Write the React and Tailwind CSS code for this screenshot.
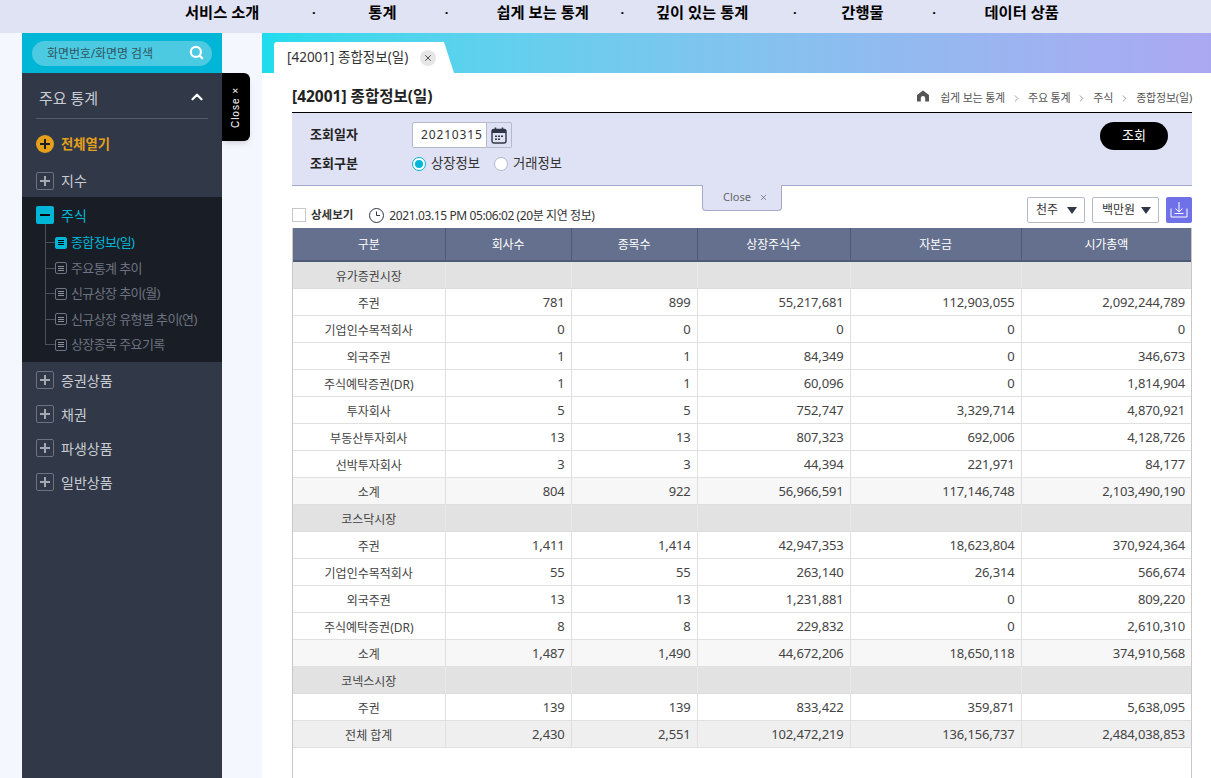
import { Search, ChevronUp, X, ChevronRight } from 'lucide-react'

const topMenu = [
  { label: '서비스 소개', gap: 'w-[109px]' },
  { label: '통계', gap: 'w-[100px]' },
  { label: '쉽게 보는 통계', gap: 'w-[67px]' },
  { label: '깊이 있는 통계', gap: 'w-[93px]' },
  { label: '간행물', gap: 'w-[101px]' },
  { label: '데이터 상품' },
]

const subMenu = [
  { label: '종합정보(일)', active: true },
  { label: '주요통계 추이' },
  { label: '신규상장 추이(월)' },
  { label: '신규상장 유형별 추이(연)' },
  { label: '상장종목 주요기록' },
]

const rows = [
  { type: 'section', cells: ['유가증권시장', '', '', '', '', ''] },
  { cells: ['주권', '781', '899', '55,217,681', '112,903,055', '2,092,244,789'] },
  { cells: ['기업인수목적회사', '0', '0', '0', '0', '0'] },
  { cells: ['외국주권', '1', '1', '84,349', '0', '346,673'] },
  { cells: ['주식예탁증권(DR)', '1', '1', '60,096', '0', '1,814,904'] },
  { cells: ['투자회사', '5', '5', '752,747', '3,329,714', '4,870,921'] },
  { cells: ['부동산투자회사', '13', '13', '807,323', '692,006', '4,128,726'] },
  { cells: ['선박투자회사', '3', '3', '44,394', '221,971', '84,177'] },
  { type: 'sub', cells: ['소계', '804', '922', '56,966,591', '117,146,748', '2,103,490,190'] },
  { type: 'section', cells: ['코스닥시장', '', '', '', '', ''] },
  { cells: ['주권', '1,411', '1,414', '42,947,353', '18,623,804', '370,924,364'] },
  { cells: ['기업인수목적회사', '55', '55', '263,140', '26,314', '566,674'] },
  { cells: ['외국주권', '13', '13', '1,231,881', '0', '809,220'] },
  { cells: ['주식예탁증권(DR)', '8', '8', '229,832', '0', '2,610,310'] },
  { type: 'sub', cells: ['소계', '1,487', '1,490', '44,672,206', '18,650,118', '374,910,568'] },
  { type: 'section', cells: ['코넥스시장', '', '', '', '', ''] },
  { cells: ['주권', '139', '139', '833,422', '359,871', '5,638,095'] },
  { type: 'total', cells: ['전체 합계', '2,430', '2,551', '102,472,219', '136,156,737', '2,484,038,853'] },
]

const rowBg = { section: 'bg-[#e2e2e2]', sub: 'bg-[#f7f7f7]', total: 'bg-[#efefef]' }

function PlusBox() {
  return (
    <span className="w-[18px] h-[18px] rounded-[2px] border border-[#6b7280] flex items-center justify-center shrink-0">
      <svg width="12" height="12" viewBox="0 0 12 12"><path d="M6 1v10M1 6h10" stroke="#a3a8b3" strokeWidth="2" /></svg>
    </span>
  )
}

function MenuItem({ label }) {
  return (
    <div className="h-[34px] pl-[14px] flex items-center gap-[7px] text-[14px] text-[#c9ccd3]">
      <PlusBox />
      {label}
    </div>
  )
}

function DocIcon({ active }) {
  return (
    <span className={`w-3 h-3 rounded-[2px] border flex flex-col items-center justify-center gap-px shrink-0 ${active ? 'bg-[#00b6d6] border-[#00b6d6]' : 'border-[#6b7486]'}`}>
      <i className={`block w-[6px] h-px ${active ? 'bg-black' : 'bg-[#8b909b]'}`} />
      <i className={`block w-[6px] h-px ${active ? 'bg-black' : 'bg-[#8b909b]'}`} />
      <i className={`block w-[6px] h-px ${active ? 'bg-black' : 'bg-[#8b909b]'}`} />
    </span>
  )
}

function Caret() {
  return <span className="w-0 h-0 border-x-[5px] border-x-transparent border-t-[7px] border-t-[#2f3745]" />
}

function CalendarIcon() {
  return (
    <svg width="16" height="17" viewBox="0 0 16 17" fill="none">
      <rect x="1" y="2.5" width="14" height="13.5" rx="2" stroke="#2f3745" strokeWidth="1.4" />
      <path d="M1 3.5a1.5 1.5 0 0 1 1.5-1.5h11A1.5 1.5 0 0 1 15 3.5V6H1z" fill="#2f3745" />
      <path d="M4.5 0.5v3M11.5 0.5v3" stroke="#2f3745" strokeWidth="1.6" />
      <path d="M4 8.5h2v1.6H4zM7 8.5h2v1.6H7zM10 8.5h2v1.6h-2zM4 11.5h2v1.6H4zM7 11.5h2v1.6H7z" fill="#2f3745" />
    </svg>
  )
}

function ClockIcon() {
  return (
    <svg width="15" height="15" viewBox="0 0 15 15" fill="none" stroke="#2f3745" strokeWidth="1">
      <circle cx="7.5" cy="7.5" r="7" />
      <path d="M7.5 3.5v4h3.5" />
    </svg>
  )
}

function HomeIcon() {
  return (
    <svg width="12" height="12" viewBox="0 0 12 12" fill="#555">
      <path d="M6 0.5 12 5v6.5H8.2V8.3a2.2 2.2 0 0 0-4.4 0v3.2H0V5z" />
    </svg>
  )
}

function DownloadIcon() {
  return (
    <svg width="18" height="18" viewBox="0 0 18 18" fill="none" stroke="#fff" strokeWidth="1">
      <path d="M9 1v9.5M5.5 7.5 9 11l3.5-3.5" />
      <path d="M4.5 12.5h9" />
      <path d="M1 7.5v8.5h16V7.5" />
    </svg>
  )
}

export default function App() {
  return (
    <div className="relative h-[778px] overflow-hidden bg-white text-[#333] font-['Noto_Sans','Noto_Sans_CJK_KR',sans-serif]">
      {/* Top nav */}
      <div className="h-[33px] bg-[#e0e3f3] flex items-center pl-[185px] pb-[8px] text-[15.3px] font-bold text-black leading-none whitespace-nowrap">
        {topMenu.map((item) => (
          <div key={item.label} className="contents">
            <span>{item.label}</span>
            {item.gap && <span className={`${item.gap} text-center text-[13px]`}>·</span>}
          </div>
        ))}
      </div>

      <div className="flex h-[745px]">
        <div className="w-[22px] bg-[#f5f7fe]" />

        {/* Sidebar */}
        <aside className="relative w-[200px] bg-[#313847]">
          <div className="h-[40px] bg-[#00b6d6] pl-[10px] pt-2">
            <div className="w-[180px] h-[25px] rounded-full bg-[#4ccae2] flex items-center justify-between pl-[15px] pr-2 text-[12px] tracking-[-0.1px] text-[#2f5560]">
              화면번호/화면명 검색
              <Search size={15} strokeWidth={3.5} className="text-white -mt-[2px]" />
            </div>
          </div>

          <div className="mx-[14px] h-[46px] border-b border-[#565c6b] flex items-center justify-between pl-[3px] pr-[2px] pt-[5px] text-[15px] text-[#c9ccd3]">
            주요 통계
            <ChevronUp size={18} strokeWidth={3} className="text-white -mt-[3px]" />
          </div>

          <div className="h-[50px] pl-[14px] flex items-center gap-[7px] text-[13.3px] font-bold text-[#e5a11c]">
            <span className="w-[18px] h-[18px] rounded-full bg-[#e5a11c] flex items-center justify-center">
              <svg width="12" height="12" viewBox="0 0 12 12"><path d="M6 1v10M1 6h10" stroke="#1b1e26" strokeWidth="2" /></svg>
            </span>
            <span className="mt-px">전체열기</span>
          </div>

          <div className="h-[23px] pl-[14px] flex items-center gap-[7px] text-[14px] text-[#c9ccd3] mb-[5px]">
            <PlusBox />
            지수
          </div>

          <div className="bg-[#191e26] h-[165px] pt-[9px]">
            <div className="pl-[14px] flex items-center gap-[7px] text-[14px] text-[#00b6d6] h-[18px]">
              <span className="w-[18px] h-[18px] rounded-[2px] bg-[#00b6d6] flex items-center justify-center">
                <i className="block w-[10px] h-[2px] bg-black" />
              </span>
              주식
            </div>
            <div className="relative mt-[6px] pl-[33px]">
              <span className="absolute left-[23px] top-[-6px] w-px h-[121px] bg-[#4a4f59]" />
              {subMenu.map((item) => (
                <div key={item.label} className={`relative h-[25.5px] flex items-center gap-[4px] text-[13px] tracking-[-0.6px] ${item.active ? 'text-[#00b6d6]' : 'text-[#6e7280]'}`}>
                  <span className="absolute left-[-10px] top-[12px] w-[10px] h-px bg-[#4a4f59]" />
                  <DocIcon active={item.active} />
                  {item.label}
                </div>
              ))}
            </div>
          </div>

          <div className="pt-px">
            <MenuItem label="증권상품" />
            <MenuItem label="채권" />
            <MenuItem label="파생상품" />
            <MenuItem label="일반상품" />
          </div>

          {/* Sidebar close handle */}
          <div className="absolute left-[200px] top-[40px] w-[28px] h-[68px] bg-black rounded-r-[6px] shadow-md flex items-center justify-center">
            <span className="text-[10px] text-white tracking-[1px] -rotate-90 whitespace-nowrap font-['Liberation_Sans',sans-serif]">Close ×</span>
          </div>
        </aside>

        <div className="w-[40px] bg-[#f5f7fe]" />

        {/* Main */}
        <main className="relative flex-1 min-w-0">
          <div className="h-[40px] bg-gradient-to-r from-[#1ddcec] to-[#aba8f2] pl-3 pt-[9px]">
            <div className="w-[180px] h-[31px] bg-white [clip-path:polygon(0_0,170px_0,180px_100%,0_100%)] rounded-tl-[3px] flex items-center pl-[13px] text-[13.5px] text-[#333]">
              [42001] 종합정보(일)
              <span className="ml-[12px] w-4 h-4 rounded-full bg-[#e6e6e6] flex items-center justify-center">
                <X size={10} strokeWidth={2} className="text-[#333]" />
              </span>
            </div>
          </div>

          <div className="ml-[30px] w-[900px]">
            <div className="h-[40px] flex items-end justify-between pb-[5px] border-b border-black">
              <h1 className="text-[15.5px] font-bold text-[#222] leading-[22px]">[42001] 종합정보(일)</h1>
              <div className="flex items-center text-[11px] text-[#555] gap-[6px] leading-[16px] tracking-[-0.2px] mb-[1px]">
                <span className="mr-[5px] -mt-[4px]"><HomeIcon /></span>
                쉽게 보는 통계
                <ChevronRight size={11} strokeWidth={1.2} />
                주요 통계
                <ChevronRight size={11} strokeWidth={1.2} />
                주식
                <ChevronRight size={11} strokeWidth={1.2} />
                종합정보(일)
              </div>
            </div>

            {/* Search panel */}
            <div className="h-[73px] bg-[#dfe2f4] border-b border-[#a5a9c8] pl-[18px] pr-[24px] pt-[9px] flex justify-between">
              <div>
                <div className="flex items-center h-[26px]">
                  <span className="w-[102px] text-[13px] font-bold text-[#222]">조회일자</span>
                  <div className="w-[75px] h-[26px] bg-white border border-[#b6b9cc] rounded-l-[2px] flex items-center pl-[8px] text-[12px] tracking-[0.85px]">20210315</div>
                  <div className="w-[25px] h-[26px] border border-l-0 border-[#b6b9cc] rounded-r-[2px] flex items-center justify-center">
                    <CalendarIcon />
                  </div>
                </div>
                <div className="flex items-center h-[26px] mt-[3px]">
                  <span className="w-[102px] text-[13px] font-bold text-[#222]">조회구분</span>
                  <span className="w-[14px] h-[14px] rounded-full border border-[#00b6d6] bg-white flex items-center justify-center mr-[5px]">
                    <i className="block w-2 h-2 rounded-full bg-[#00b6d6]" />
                  </span>
                  <span className="text-[13.3px] mr-[14px]">상장정보</span>
                  <span className="w-[14px] h-[14px] rounded-full border border-[#b6b9cc] bg-white mr-[5px]" />
                  <span className="text-[13.3px]">거래정보</span>
                </div>
              </div>
              <button className="w-[68px] h-[28px] rounded-full bg-black text-white text-[13px]">조회</button>
            </div>

            {/* Toolbar */}
            <div className="h-[42px] flex items-end justify-between pb-[4px]">
              <div className="flex items-center text-[11px] h-[16px] mb-px">
                <span className="w-[14px] h-[14px] border border-[#c8c8c8] mr-[5px]" />
                <span className="font-bold text-[11.5px] mr-[16px]">상세보기</span>
                <span className="mr-[5px]"><ClockIcon /></span>
                <span className="text-[12px] tracking-[-0.4px] mt-[2px]">2021.03.15 PM 05:06:02 (20분 지연 정보)</span>
              </div>
              <div className="flex items-center mb-px">
                <div className="w-[58px] h-[26px] border border-[#b6b9cc] rounded-[2px] flex items-center justify-between pl-2 pr-[7px] text-[12px] mr-[7px]">
                  천주
                  <Caret />
                </div>
                <div className="w-[67px] h-[26px] border border-[#b6b9cc] rounded-[2px] flex items-center justify-between pl-[9px] pr-[7px] text-[12px] mr-[7px]">
                  백만원
                  <Caret />
                </div>
                <div className="w-[26px] h-[26px] bg-[#7070e8] rounded-[2px] flex items-center justify-center">
                  <DownloadIcon />
                </div>
              </div>
            </div>

            {/* Table */}
            <div className="w-[900px] h-[600px] border-x border-[#c8c8c8]">
              <table className="table-fixed border-collapse w-[898px] text-[13px] tracking-[-0.15px] text-[#444]">
                <colgroup>
                  <col className="w-[152px]" />
                  <col className="w-[126px]" />
                  <col className="w-[126px]" />
                  <col className="w-[153px]" />
                  <col className="w-[171px]" />
                  <col className="w-[170px]" />
                </colgroup>
                <thead>
                  <tr className="h-[33px] bg-[#64708d] text-white text-[12px]">
                    {['구분', '회사수', '종목수', '상장주식수', '자본금', '시가총액'].map((h) => (
                      <th key={h} className="p-0 pt-[2px] font-normal text-center border-r last:border-r-0 border-b-2 border-[#4e5a78]">{h}</th>
                    ))}
                  </tr>
                </thead>
                <tbody>
                  {rows.map((row, i) => (
                    <tr key={i} className={`h-[27px] ${rowBg[row.type] || 'bg-white'}`}>
                      {row.cells.map((c, j) => (
                        <td key={j} className={`p-0 border-r last:border-r-0 border-b leading-none ${row.type === 'section' ? 'border-r-[#e9e9e9] border-b-[#dcdcdc]' : 'border-[#e0e0e0]'} ${j === 0 ? 'pt-[4px] text-center text-[12px] tracking-normal' : 'pt-px text-right pr-[6px]'}`}>{c}</td>
                      ))}
                    </tr>
                  ))}
                </tbody>
              </table>
            </div>
          </div>

          {/* Search panel close tab */}
          <div className="absolute left-[440px] top-[152px] w-[80px] h-[26px] bg-[#dfe2f4] border border-t-0 border-[#a5a9c8] rounded-b-[4px] flex items-center justify-center gap-[8px] pl-[7px] text-[11px] text-[#666]">
            Close
            <X size={9} strokeWidth={1.5} className="text-[#444]" />
          </div>
        </main>
      </div>
    </div>
  )
}
